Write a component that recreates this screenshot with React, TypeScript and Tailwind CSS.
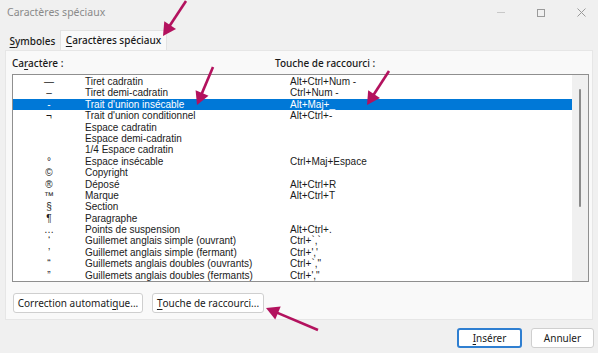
import React from "react";

type Row = { sym: string; name: string; key: string };

const rows: Row[] = [
  { sym: "—", name: "Tiret cadratin", key: "Alt+Ctrl+Num -" },
  { sym: "–", name: "Tiret demi-cadratin", key: "Ctrl+Num -" },
  { sym: "-", name: "Trait d'union insécable", key: "Alt+Maj+_" },
  { sym: "¬", name: "Trait d'union conditionnel", key: "Alt+Ctrl+-" },
  { sym: "", name: "Espace cadratin", key: "" },
  { sym: "", name: "Espace demi-cadratin", key: "" },
  { sym: "", name: "1/4 Espace cadratin", key: "" },
  { sym: "°", name: "Espace insécable", key: "Ctrl+Maj+Espace" },
  { sym: "©", name: "Copyright", key: "" },
  { sym: "®", name: "Déposé", key: "Alt+Ctrl+R" },
  { sym: "™", name: "Marque", key: "Alt+Ctrl+T" },
  { sym: "§", name: "Section", key: "" },
  { sym: "¶", name: "Paragraphe", key: "" },
  { sym: "…", name: "Points de suspension", key: "Alt+Ctrl+." },
  { sym: "‘", name: "Guillemet anglais simple (ouvrant)", key: "Ctrl+`,`" },
  { sym: "’", name: "Guillemet anglais simple (fermant)", key: "Ctrl+','" },
  { sym: "“", name: "Guillemets anglais doubles (ouvrants)", key: "Ctrl+`,\"" },
  { sym: "”", name: "Guillemets anglais doubles (fermants)", key: "Ctrl+',\"" },
];

const SELECTED = 2;

function arrowHead(tx: number, ty: number, hx: number, hy: number) {
  const dx = hx - tx;
  const dy = hy - ty;
  const len = Math.hypot(dx, dy);
  const ux = dx / len;
  const uy = dy / len;
  const bx = hx - ux * 13;
  const by = hy - uy * 13;
  const px = -uy * 7;
  const py = ux * 7;
  return {
    line: { x2: hx - ux * 8, y2: hy - uy * 8 },
    points: `${hx},${hy} ${bx + px},${by + py} ${bx - px},${by - py}`,
  };
}

function Arrow({ tail, tip }: { tail: [number, number]; tip: [number, number] }) {
  const h = arrowHead(tail[0], tail[1], tip[0], tip[1]);
  return (
    <g>
      <line x1={tail[0]} y1={tail[1]} x2={h.line.x2} y2={h.line.y2} stroke="#b3125e" strokeWidth={2.6} />
      <polygon points={h.points} fill="#b3125e" />
    </g>
  );
}

function Btn({ children, primary, className }: { children: React.ReactNode; primary?: boolean; className?: string }) {
  return (
    <div
      className={
        "flex h-[20px] items-center justify-center whitespace-nowrap rounded-[3px] bg-white text-[10px] text-[#1a1a1a] " +
        (primary ? "border-2 border-[#2f7fd1] " : "border border-[#cfcfcf] ") +
        (className ?? "")
      }
    >
      {children}
    </div>
  );
}

export default function App() {
  return (
    <div
      className="relative h-[353px] w-[598px] overflow-hidden bg-[#f0f0f0] text-[#1a1a1a]"
      style={{ fontFamily: '"Noto Sans", "Open Sans", sans-serif' }}
    >
      {/* title bar */}
      <div className="flex h-[25px] items-center justify-between pl-[7px] pr-[12px]">
        <span className="text-[10.5px] text-[#8a8a8a]">Caractères spéciaux</span>
        <div className="flex items-center gap-[32px] text-[#a8a8a8]">
          <div className="h-px w-[8px] bg-[#c8c8c8]" />
          <div className="h-[8px] w-[8px] border border-[#9a9a9a]" />
          <svg width="9" height="9" viewBox="0 0 9 9">
            <path d="M0.5 0.5 L8.5 8.5 M8.5 0.5 L0.5 8.5" stroke="#9a9a9a" strokeWidth="1" />
          </svg>
        </div>
      </div>

      {/* tabs */}
      <div className="flex h-[25px] items-end pl-[5px] pt-[6px]">
        <div className="flex h-[18px] w-[55px] items-center justify-center text-[10px] font-medium">
          <span>
            <u className="underline-offset-2">S</u>ymboles
          </span>
        </div>
        <div className="flex h-[20px] w-[107px] items-center justify-center border-x border-t border-[#e3e3e3] bg-[#f9f9f9] text-[10px] font-medium">
          <span>
            <u className="underline-offset-2">C</u>aractères spéciaux
          </span>
        </div>
      </div>

      {/* panel */}
      <div className="mx-[5px] h-[270px] border border-[#e6e6e6] bg-[#f9f9f9] pl-[6px] pr-[3px]">
        <div className="flex h-[23px] items-center pt-[2px] text-[10px] font-medium">
          <span className="w-[263px]">
            Ca<u className="underline-offset-2">r</u>actère :
          </span>
          <span>Touche de raccourci :</span>
        </div>

        <div className="flex h-[208px] border border-[#8f8f8f] bg-white">
          <div className="flex-1 pt-[1px]" style={{ fontFamily: '"Liberation Sans", Arial, sans-serif' }}>
            {rows.map((r, i) => (
              <div
                key={r.name}
                className={
                  "flex h-[11.4px] items-center text-[10px] leading-[11.4px] " +
                  (i === SELECTED ? "bg-[#0078d7] text-white" : "")
                }
              >
                <span className="w-[72px] text-center">{r.sym}</span>
                <span className="w-[205px] whitespace-nowrap">{r.name}</span>
                <span className="whitespace-nowrap">{r.key}</span>
              </div>
            ))}
          </div>
          <div className="flex w-[16px] justify-center bg-[#f0f0f0] pt-[14px]">
            <div className="h-[118px] w-[2px] rounded-full bg-[#8a8a8a]" />
          </div>
        </div>

        <div className="mt-[11px] flex gap-[9px] pl-px">
          <Btn className="w-[130px]">
            Correction automati<u className="underline-offset-2">q</u>ue...
          </Btn>
          <Btn className="w-[112px]">
            <u className="underline-offset-2">T</u>ouche de raccourci...
          </Btn>
        </div>
      </div>

      {/* dialog buttons */}
      <div className="mt-[8px] flex justify-end gap-[9px] pr-[4px]">
        <Btn primary className="w-[65px]">
          <u className="underline-offset-2">I</u>nsérer
        </Btn>
        <Btn className="w-[63px]">Annuler</Btn>
      </div>

      {/* annotation arrows */}
      <svg className="pointer-events-none absolute left-0 top-0" width="598" height="353">
        <Arrow tail={[186, 1]} tip={[163, 36]} />
        <Arrow tail={[213, 67]} tip={[197, 105]} />
        <Arrow tail={[389, 71]} tip={[367, 105]} />
        <Arrow tail={[318, 330]} tip={[266, 308]} />
      </svg>
    </div>
  );
}
